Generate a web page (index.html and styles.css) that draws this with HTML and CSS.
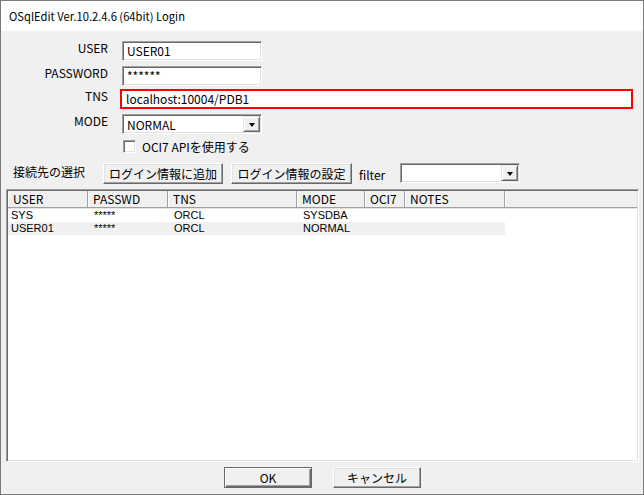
FILE: index.html
```html
<!DOCTYPE html>
<html lang="ja">
<head>
<meta charset="utf-8">
<title>OSqlEdit Login</title>
<link rel="stylesheet" href="styles.css">
</head>
<body>
<div class="window">
  <div class="titlebar">OSqlEdit Ver.10.2.4.6 (64bit) Login</div>
  <div class="client">
    <div class="form">
      <div class="row row-user">
        <div class="lbl">USER</div>
        <div class="field">USER01</div>
      </div>
      <div class="row row-pass">
        <div class="lbl">PASSWORD</div>
        <div class="field">******</div>
      </div>
      <div class="row row-tns">
        <div class="lbl">TNS</div>
        <div class="field tns">localhost:10004/PDB1</div>
      </div>
      <div class="row row-mode">
        <div class="lbl">MODE</div>
        <div class="field combo">
          <span class="combo-text">NORMAL</span>
          <span class="drop"><span class="tri"></span></span>
        </div>
      </div>
      <div class="check-row">
        <span class="checkbox"></span>
        <span class="check-text">OCI7 APIを使用する</span>
      </div>
    </div>
    <div class="toolbar">
      <span class="tb-label">接続先の選択</span>
      <span class="btn btn-add">ログイン情報に追加</span>
      <span class="btn btn-set">ログイン情報の設定</span>
      <span class="filter-label">filter</span>
      <span class="field combo filter-combo">
        <span class="combo-text"></span>
        <span class="drop"><span class="tri"></span></span>
      </span>
    </div>
    <div class="list">
      <div class="list-head">
        <span class="hc c-user">USER</span>
        <span class="hc c-pass">PASSWD</span>
        <span class="hc c-tns">TNS</span>
        <span class="hc c-mode">MODE</span>
        <span class="hc c-oci">OCI7</span>
        <span class="hc c-notes">NOTES</span>
        <span class="hc c-rest"></span>
      </div>
      <div class="list-row">
        <span class="cell c-user first">SYS</span>
        <span class="cell c-pass">*****</span>
        <span class="cell c-tns">ORCL</span>
        <span class="cell c-mode">SYSDBA</span>
        <span class="cell c-oci"></span>
        <span class="cell c-notes"></span>
      </div>
      <div class="list-row alt">
        <span class="cell c-user first">USER01</span>
        <span class="cell c-pass">*****</span>
        <span class="cell c-tns">ORCL</span>
        <span class="cell c-mode">NORMAL</span>
        <span class="cell c-oci"></span>
        <span class="cell c-notes"></span>
      </div>
    </div>
    <div class="footer">
      <span class="btn btn-ok">OK</span>
      <span class="btn btn-cancel">キャンセル</span>
    </div>
  </div>
</div>
</body>
</html>
```
FILE: styles.css
```css
* { box-sizing: border-box; }
html, body { margin: 0; padding: 0; }
body {
  width: 644px;
  height: 495px;
  overflow: hidden;
  font-family: "Noto Sans CJK JP", "Liberation Sans", sans-serif;
  font-size: 12px;
  color: #000;
  background: #f0f0f0;
}
.window {
  width: 644px;
  height: 495px;
  border: 1px solid #7a7a7a;
  display: flex;
  flex-direction: column;
  background: #f0f0f0;
}
.titlebar {
  height: 30px;
  flex: none;
  background: #fff;
  padding-left: 8px;
  line-height: 30px;
  font-size: 11.2px;
  font-family: "Noto Sans CJK JP", "Noto Sans", sans-serif;
  color: #000;
}
.client {
  flex: 1;
  display: flex;
  flex-direction: column;
  background: #f0f0f0;
}
.form { padding-top: 10px; }
.row {
  display: flex;
  align-items: flex-start;
  height: 20px;
}
.row-pass { margin-top: 5px; }
.row-tns { margin-top: 3px; }
.row-mode { margin-top: 5px; }
.lbl {
  width: 107px;
  margin-right: 14px;
  text-align: right;
  line-height: 14px;
  margin-top: 0px;
}
.field {
  width: 140px;
  height: 20px;
  background: #fff;
  border: 1px solid;
  border-color: #a0a0a0 #fff #fff #a0a0a0;
  box-shadow: inset 1px 1px #696969, inset -1px -1px #e3e3e3;
  padding-left: 4px;
  line-height: 17px;
  white-space: nowrap;
}
.field.tns {
  width: 513px;
  margin-left: -2px;
  border: 2px solid #ff0000;
  box-shadow: none;
  padding-left: 4px;
  line-height: 15px;
}
.combo {
  display: flex;
  align-items: center;
  justify-content: space-between;
  padding-right: 1px;
}
.combo-text { line-height: 17px; }
.drop {
  width: 17px;
  height: 16px;
  background: #f0f0f0;
  border: 1px solid;
  border-color: #e3e3e3 #696969 #696969 #e3e3e3;
  box-shadow: inset 1px 1px #fff, inset -1px -1px #a0a0a0;
  display: flex;
  align-items: center;
  justify-content: center;
}
.tri {
  width: 0;
  height: 0;
  border-left: 3.5px solid transparent;
  border-right: 3.5px solid transparent;
  border-top: 4px solid #000;
  margin-top: 1px;
}
.check-row {
  display: flex;
  align-items: center;
  margin-top: 6px;
  margin-left: 122px;
  height: 13px;
}
.checkbox {
  width: 13px;
  height: 13px;
  background: #fff;
  border: 1px solid;
  border-color: #a0a0a0 #fff #fff #a0a0a0;
  box-shadow: inset 1px 1px #696969, inset -1px -1px #e3e3e3;
}
.check-text { margin-left: 6px; line-height: 13px; }
.toolbar {
  display: flex;
  align-items: center;
  margin-top: 10px;
  height: 21px;
  padding-left: 12px;
}
.tb-label { width: 90px; margin-top: -4px; }
.btn {
  display: inline-flex;
  align-items: center;
  justify-content: center;
  height: 21px;
  background: #f0f0f0;
  border: 1px solid;
  border-color: #fff #696969 #696969 #fff;
  box-shadow: inset -1px -1px #a0a0a0, inset 1px 1px #e3e3e3;
  white-space: nowrap;
}
.btn-add { width: 120px; }
.btn-set { width: 121px; margin-left: 8px; }
.filter-label { margin-left: 7px; width: 41px; margin-top: 2px; }
.filter-combo { width: 120px; height: 20px; margin-top: -1px; }
.list {
  margin: 5px 4px 0 5px;
  height: 273px;
  background: #fff;
  border: 1px solid;
  border-color: #a0a0a0 #fff #fff #a0a0a0;
  box-shadow: inset 1px 1px #696969, inset -1px -1px #e3e3e3;
  padding: 1px 1px 0 1px;
  overflow: hidden;
}
.list-head {
  display: flex;
  height: 17px;
  background: #f0f0f0;
  border-bottom: 1px solid #a0a0a0;
  box-shadow: 0 1px #e3e3e3;
}
.hc {
  height: 16px;
  line-height: 15px;
  padding-left: 5px;
  border-right: 1px solid #a0a0a0;
  box-shadow: inset 1px 0 #fff;
  white-space: nowrap;
}
.c-user { width: 80px; }
.c-pass { width: 80px; }
.c-tns { width: 129px; }
.c-mode { width: 68px; }
.c-oci { width: 40px; }
.c-notes { width: 100px; }
.c-rest { flex: 1; border-right: none; }
.list-row {
  display: flex;
  height: 13px;
  width: 497px;
}
.list-head + .list-row { margin-top: 1px; }
.list-row.alt { background: #f0f0f0; }
.cell {
  display: block;
  height: 13px;
  line-height: 13px;
  font-family: "Liberation Sans", "Noto Sans CJK JP", sans-serif;
  font-size: 11px;
  padding-left: 6px;
  white-space: nowrap;
}
.cell.first { padding-left: 3px; }
.footer {
  display: flex;
  justify-content: center;
  gap: 21px;
  margin-top: 5px;
  padding-left: 1px;
}
.btn-ok {
  width: 88px;
  border: 1px solid #696969;
  box-shadow: inset 1px 1px #fff, inset -1px -1px #696969, inset -2px -2px #a0a0a0;
}
.btn-cancel { width: 88px; }
```
